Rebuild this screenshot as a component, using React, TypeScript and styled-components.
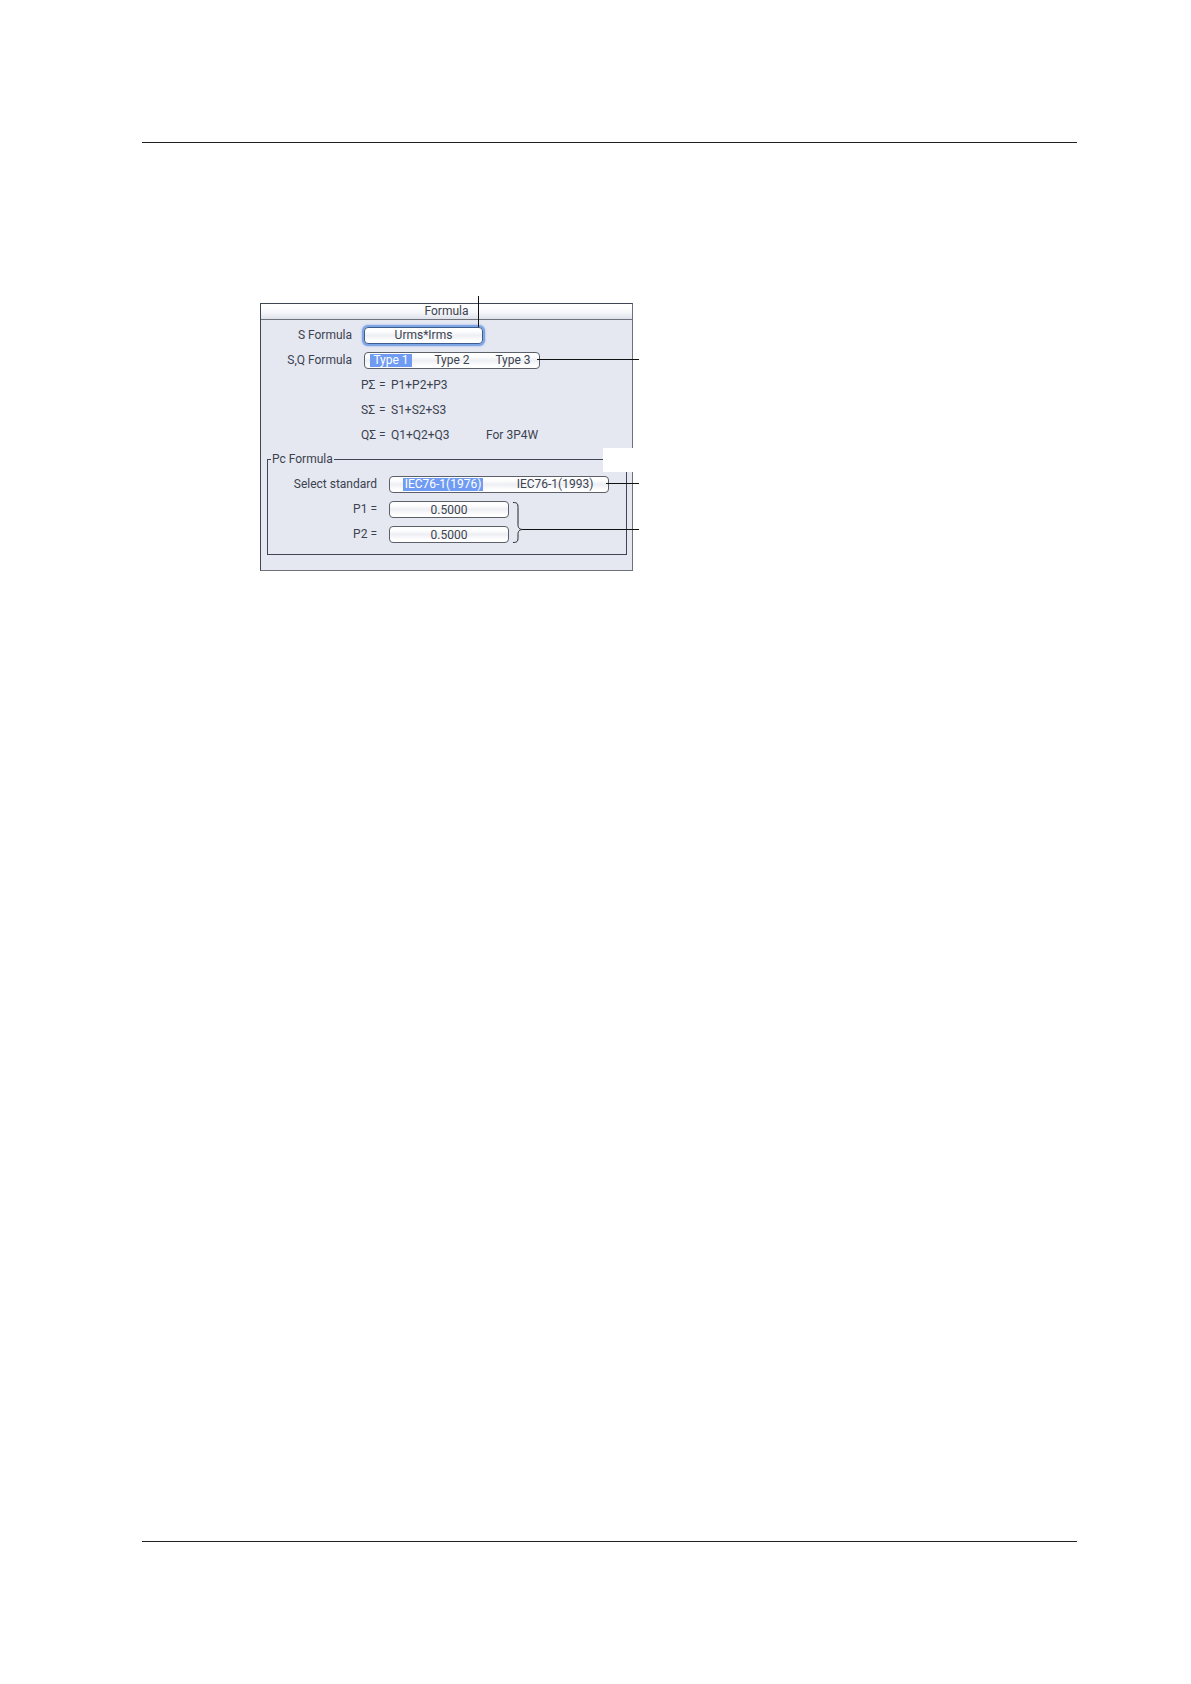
import React, { FC, useState } from 'react';
import styled, { createGlobalStyle, css } from 'styled-components';

const ink = '#3b434f';
const line = '#3f4653';
const glow = '#7ea6e6';

const GlobalStyle = createGlobalStyle`
  * {
    box-sizing: border-box;
  }

  body {
    margin: 0;
    background: #fff;
    color: ${ink};
    font-family: Roboto, 'Liberation Sans', sans-serif;
    font-size: 12px;
    line-height: 13px;
  }
`;

const Page = styled.div`
  display: flex;
  flex-direction: column;
  min-height: 100vh;
  padding: 142px 114px 142px 142px;
`;

const Content = styled.main`
  flex: 1;
  padding: 160px 0 0 118px;
  border-top: 1px solid #231f20;
  border-bottom: 1px solid #231f20;
`;

const Figure = styled.div`
  position: relative;
  width: 373px;
`;

const Panel = styled.section`
  padding-bottom: 15px;
  border: 1px solid #6c717c;
  border-top-color: ${line};
  border-left-color: ${line};
  background: #e5e7f1;
`;

const Title = styled.h1`
  height: 16px;
  margin: 0 0 3px;
  border-bottom: 1px solid #6c717c;
  background: linear-gradient(#fff 20%, #f4f5fa 60%, #dfe1ea);
  font-size: 12px;
  font-weight: 400;
  line-height: 14px;
  text-align: center;
`;

const Row = styled.div<{ $labelWidth: number }>`
  display: grid;
  grid-template-columns: ${({ $labelWidth }) => $labelWidth}px max-content;
  column-gap: 12px;
  align-items: center;
  height: 25px;
`;

const Label = styled.label`
  text-align: right;
  white-space: nowrap;
`;

const controlFace = css`
  height: 17px;
  border: 1px solid #5c6068;
  border-radius: 4px;
  background: linear-gradient(#fff 20%, #eeeff4 50%, #fff 85%);
  color: ${ink};
  font: inherit;
`;

const ValueButton = styled.button`
  ${controlFace};
  width: 119px;
  padding: 0;
  line-height: 13px;
  border-color: #3d5c8c;
  box-shadow: 0 0 0 2px ${glow}, 0 0 2px 2px ${glow};
`;

const ValueInput = styled.input`
  ${controlFace};
  width: 120px;
  padding: 0;
  text-align: center;
`;

const Choices = styled.div<{ $width: number; $inset: number }>`
  ${controlFace};
  display: flex;
  align-items: center;
  justify-content: space-between;
  width: ${({ $width }) => $width}px;
  padding: 0 ${({ $inset }) => $inset}px;
`;

const Choice = styled.label<{ $active: boolean; $width: number }>`
  position: relative;
  width: ${({ $width }) => $width}px;
  background: ${({ $active }) => ($active ? '#6f9bf3' : 'transparent')};
  color: ${({ $active }) => ($active ? '#fff' : ink)};
  text-align: center;
  white-space: nowrap;
`;

const HiddenRadio = styled.input`
  position: absolute;
  inset: 0;
  margin: 0;
  opacity: 0;
`;

const Equation = styled.div`
  display: grid;
  grid-template-columns: 125px max-content;
  align-items: center;
  height: 25px;
  padding-left: 100px;
`;

const Terms = styled.span`
  display: grid;
  grid-template-columns: 18px 12px max-content;
`;

const Group = styled.fieldset`
  min-width: 0;
  margin: 5px 5px 0 6px;
  padding: 6px 0 7px;
  border: 1px solid ${line};
`;

const Legend = styled.legend`
  margin-left: 3px;
  padding: 0 1px;
`;

const Callouts = styled.svg`
  position: absolute;
  top: -8px;
  left: 0;
`;

type ChoiceGroupProps = {
  name: string;
  label: string;
  options: string[];
  width: number;
  inset: number;
  optionWidth: number;
};

const ChoiceGroup: FC<ChoiceGroupProps> = ({
  name,
  label,
  options,
  width,
  inset,
  optionWidth,
}) => {
  const [selected, setSelected] = useState(options[0]);

  return (
    <Choices role="radiogroup" aria-labelledby={label} $width={width} $inset={inset}>
      {options.map((option) => (
        <Choice key={option} $active={option === selected} $width={optionWidth}>
          <HiddenRadio
            type="radio"
            name={name}
            checked={option === selected}
            onChange={() => setSelected(option)}
          />
          {option}
        </Choice>
      ))}
    </Choices>
  );
};

const equations = [
  { name: 'PΣ', sum: 'P1+P2+P3', note: '' },
  { name: 'SΣ', sum: 'S1+S2+S3', note: '' },
  { name: 'QΣ', sum: 'Q1+Q2+Q3', note: 'For 3P4W' },
];

const App: FC = () => (
  <>
    <GlobalStyle />
    <Page>
      <Content>
        <Figure>
          <Panel>
            <Title>Formula</Title>
            <Row $labelWidth={91}>
              <Label htmlFor="s-formula">S Formula</Label>
              <ValueButton id="s-formula" type="button">
                Urms*Irms
              </ValueButton>
            </Row>
            <Row $labelWidth={91}>
              <Label as="span" id="sq-formula">
                S,Q Formula
              </Label>
              <ChoiceGroup
                name="sq"
                label="sq-formula"
                options={['Type 1', 'Type 2', 'Type 3']}
                width={176}
                inset={5}
                optionWidth={42}
              />
            </Row>
            {equations.map(({ name, sum, note }) => (
              <Equation key={name}>
                <Terms>
                  <span>{name}</span>
                  <span>=</span>
                  <span>{sum}</span>
                </Terms>
                <span>{note}</span>
              </Equation>
            ))}
            <Group>
              <Legend>Pc Formula</Legend>
              <Row $labelWidth={109}>
                <Label as="span" id="standard">
                  Select standard
                </Label>
                <ChoiceGroup
                  name="standard"
                  label="standard"
                  options={['IEC76-1(1976)', 'IEC76-1(1993)']}
                  width={220}
                  inset={13}
                  optionWidth={80}
                />
              </Row>
              <Row $labelWidth={109}>
                <Label htmlFor="p1">P1 =</Label>
                <ValueInput id="p1" defaultValue="0.5000" />
              </Row>
              <Row $labelWidth={109}>
                <Label htmlFor="p2">P2 =</Label>
                <ValueInput id="p2" defaultValue="0.5000" />
              </Row>
            </Group>
          </Panel>
          <Callouts width="380" height="278" fill="none" aria-hidden="true">
            <rect x="343" y="153" width="37" height="24" fill="#fff" />
            <g stroke="#111" shapeRendering="crispEdges">
              <path d="M218.5 1V32M277 64.5H379M346 188.5H379M263 234.5H379" />
            </g>
            <path
              d="M253 207.5c4 0 5 1 5 5v17c0 3 1 5 5 5c-4 0-5 2-5 5v3c0 4-1 5-5 5"
              stroke="#222"
            />
          </Callouts>
        </Figure>
      </Content>
    </Page>
  </>
);

export default App;
